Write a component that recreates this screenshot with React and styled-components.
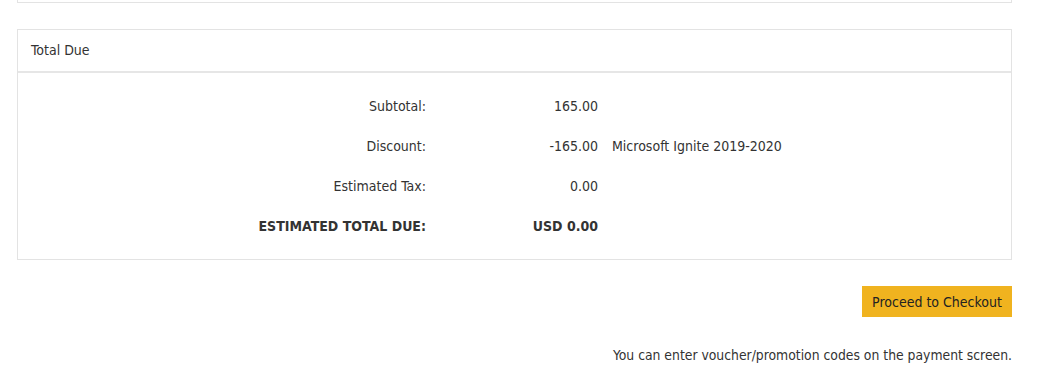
import React from 'react';
import styled, { createGlobalStyle } from 'styled-components';

const GlobalStyle = createGlobalStyle`
    html, body {
        margin: 0;
        padding: 0;
        background: #ffffff;
    }
    body {
        font-family: "DejaVu Sans Condensed", "DejaVu Sans", Tahoma, sans-serif;
        font-size: 14px;
        color: #333333;
    }
`;

const rows = [
    { label: 'Subtotal:', value: '165.00' },
    { label: 'Discount:', value: '-165.00', note: 'Microsoft Ignite 2019-2020' },
    { label: 'Estimated Tax:', value: '0.00' },
    { label: 'ESTIMATED TOTAL DUE:', value: 'USD 0.00', bold: true },
];

const App = () => {
    return (
        <>
            <GlobalStyle />
            <Page>
                <PrevPanel />
                <Panel>
                    <PanelHeader>Total Due</PanelHeader>
                    <PanelBody>
                        {rows.map((r) => (
                            <Row key={r.label} $bold={r.bold}>
                                <Label>{r.label}</Label>
                                <Value>{r.value}</Value>
                                <Note>{r.note}</Note>
                            </Row>
                        ))}
                    </PanelBody>
                </Panel>
                <Actions>
                    <CheckoutButton>Proceed to Checkout</CheckoutButton>
                    <Hint>You can enter voucher/promotion codes on the payment screen.</Hint>
                </Actions>
            </Page>
        </>
    );
};

export default App;

// CSS STYLING

const Page = styled.div`
    width: 995px;
    margin-left: 17px;
`;

const PrevPanel = styled.div`
    height: 2px;
    border: 1px solid #e3e3e3;
    border-top: none;
    margin-bottom: 26px;
`;

const Panel = styled.div`
    border: 1px solid #e3e3e3;
`;

const PanelHeader = styled.div`
    height: 41px;
    line-height: 41px;
    padding-left: 13px;
    border-bottom: 2px solid #e6e6e6;
`;

const PanelBody = styled.div`
    padding: 13px 0 13px;
`;

const Row = styled.div`
    display: grid;
    grid-template-columns: 408px 172px 1fr;
    height: 40px;
    align-items: center;
    font-weight: ${(p) => (p.$bold ? 'bold' : 'normal')};
`;

const Label = styled.div`
    text-align: right;
`;

const Value = styled.div`
    text-align: right;
`;

const Note = styled.div`
    padding-left: 14px;
`;

const Actions = styled.div`
    display: flex;
    flex-direction: column;
    align-items: flex-end;
    padding-top: 26px;
`;

const CheckoutButton = styled.button`
    width: 150px;
    height: 31px;
    background: #f0b31f;
    border: none;
    color: #222222;
    font-family: inherit;
    font-size: 14px;
    padding: 0;
    cursor: pointer;
`;

const Hint = styled.p`
    margin: 28px 0 0;
    line-height: 20px;
    font-size: 13.8px;
`;
